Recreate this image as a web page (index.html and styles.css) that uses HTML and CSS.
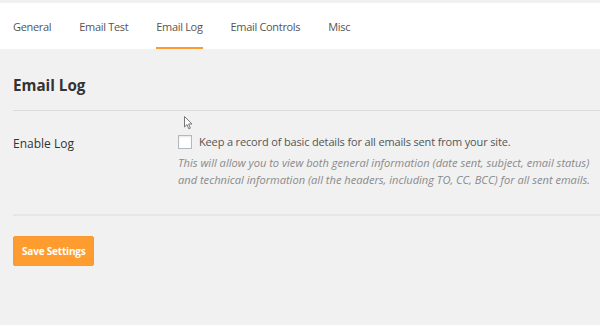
FILE: index.html
```html
<!doctype html>
<html lang="en">
    <head>
        <meta charset="UTF-8">
        <title>Email Log</title>
        <link rel="stylesheet" href="styles.css">
    </head>
    <body>
        <nav class="tabs">
            <a class="tab">General</a>
            <a class="tab">Email Test</a>
            <a class="tab active">Email Log</a>
            <a class="tab">Email Controls</a>
            <a class="tab">Misc</a>
        </nav>
        <main class="panel">
            <h2 class="panel-title">Email Log</h2>
            <div class="form-row">
                <div class="form-label">Enable Log</div>
                <div class="form-field">
                    <label class="check">
                        <span class="checkbox"></span>
                        Keep a record of basic details for all emails sent from your site.
                    </label>
                    <p class="description">This will allow you to view both general information (date sent, subject, email status) and technical information (all the headers, including TO, CC, BCC) for all sent emails.</p>
                </div>
            </div>
            <button class="save-btn">Save Settings</button>
        </main>
        <svg class="cursor" width="9" height="14" viewBox="0 0 9 14">
            <path d="M0.5 0.5 L0.5 11 L3 8.6 L4.8 12.8 L6.4 12.1 L4.6 8 L8 8 Z" fill="#fff" stroke="#777" stroke-width="1"/>
        </svg>
    </body>
</html>
```

FILE: styles.css
```css
:root {
    --bg-color: #f1f1f1;
    --accent-color: #ff9a2e;
    --text-color: #444;
    --muted-color: #8a8a8a;
    --line-color: #dcdcdc;
}
* {
    box-sizing: border-box;
}
body {
    margin: 0;
    padding-top: 3px;
    font-family: "Open Sans", sans-serif;
    font-size: 11px;
    color: var(--text-color);
    background-color: var(--bg-color);
}
.tabs {
    display: flex;
    gap: 28px;
    height: 46px;
    padding: 0 13px;
    background-color: #fff;
}
.tab {
    display: flex;
    align-items: center;
    padding-top: 3px;
    border-bottom: 2px solid transparent;
    letter-spacing: -0.32px;
    color: #555;
    cursor: pointer;
}
.tab.active {
    border-bottom-color: var(--accent-color);
}
.panel {
    position: relative;
    padding-left: 13px;
}
.panel-title {
    margin: 0;
    padding: 26px 0 15px;
    font-size: 15.2px;
    font-weight: 700;
    color: #333;
    border-bottom: 1px solid var(--line-color);
}
.form-row {
    display: flex;
    padding: 23px 0 26px;
    border-bottom: 2px solid #e6e6e6;
}
.form-label {
    width: 165px;
    flex-shrink: 0;
    padding-top: 1px;
    font-size: 12px;
    color: #333;
}
.form-field {
    flex: 1;
}
.check {
    display: flex;
    align-items: center;
    gap: 7px;
    letter-spacing: -0.15px;
    color: #555;
}
.checkbox {
    width: 14px;
    height: 14px;
    border: 1px solid #b4b9be;
    background-color: #fff;
    box-shadow: inset 0 1px 2px rgba(0, 0, 0, 0.1);
}
.description {
    margin: 5px 0 0;
    font-size: 11.1px;
    font-style: italic;
    line-height: 17px;
    color: var(--muted-color);
}
.save-btn {
    margin-top: 20px;
    padding: 0 8px;
    height: 30px;
    border: 1px solid #f59a34;
    border-radius: 2px;
    background-color: #fe9c2f;
    font-family: "Open Sans", sans-serif;
    font-size: 10px;
    font-weight: 700;
    letter-spacing: -0.2px;
    color: #fff;
    cursor: pointer;
}
.cursor {
    position: absolute;
    left: 184px;
    top: 116px;
}
```
